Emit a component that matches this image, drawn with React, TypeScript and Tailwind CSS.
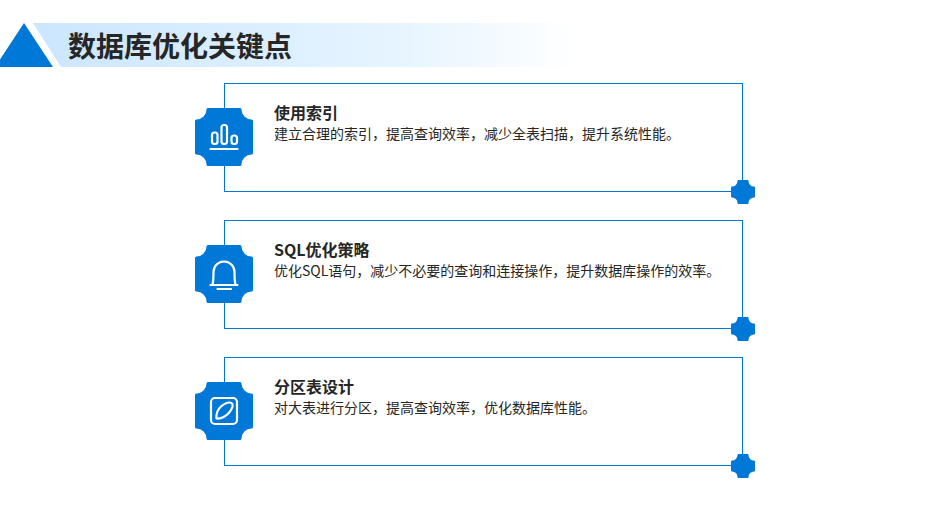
import React from "react";

const BLUE = "#0078d7";

const Badge = ({ size, cut, round, children }: { size: number; cut: number; round: number; children?: React.ReactNode }) => {
  // concave corners, tips softened with a round stroke
  const a = round / 2;
  const b = size - a;
  const c = cut;
  const p = `M${a + c} ${a}H${b - c}A${c} ${c} 0 0 0 ${b} ${a + c}V${b - c}A${c} ${c} 0 0 0 ${b - c} ${b}H${a + c}A${c} ${c} 0 0 0 ${a} ${b - c}V${a + c}A${c} ${c} 0 0 0 ${a + c} ${a}Z`;
  return (
    <svg width={size} height={size} viewBox={`0 0 ${size} ${size}`} className="block">
      <path d={p} fill={BLUE} stroke={BLUE} strokeWidth={round} strokeLinejoin="round" />
      {children}
    </svg>
  );
};

const BarsIcon = () => (
  <g fill="none" stroke="#fff" strokeWidth="2.2">
    <rect x="17" y="24.5" width="5.5" height="11.5" rx="2.5" />
    <rect x="26.5" y="17" width="5.5" height="19" rx="2.5" />
    <rect x="36.5" y="27.5" width="5.5" height="8.5" rx="2.5" />
    <path d="M15.5 41H42.5" strokeLinecap="round" />
  </g>
);

const BellIcon = () => (
  <g fill="none" stroke="#fff" strokeWidth="2.2" strokeLinecap="round">
    <path d="M17.5 39.5C18.5 36 18.5 31 18.5 27A10.5 10.5 0 0 1 39.5 27C39.5 31 39.5 36 40.5 39.5" />
    <path d="M15.5 40H42.5" />
    <path d="M22.5 44H36" />
  </g>
);

const NoteIcon = () => (
  <g fill="none" stroke="#fff" strokeWidth="2.2" strokeLinejoin="round">
    <rect x="16" y="16" width="26" height="26" rx="4" />
    <path d="M21.5 36.5C21 31 22.5 27.5 26 24.5C29 22 32 20.5 34.5 20.5C37 20.5 38 22 37.5 24.5C36.5 28 33.5 32 29.5 34.5C26.5 36.3 24 36.8 21.5 36.5Z" />
  </g>
);

const items = [
  {
    title: "使用索引",
    text: "建立合理的索引，提高查询效率，减少全表扫描，提升系统性能。",
    icon: <BarsIcon />,
  },
  {
    title: "SQL优化策略",
    text: "优化SQL语句，减少不必要的查询和连接操作，提升数据库操作的效率。",
    icon: <BellIcon />,
  },
  {
    title: "分区表设计",
    text: "对大表进行分区，提高查询效率，优化数据库性能。",
    icon: <NoteIcon />,
  },
];

const App = () => {
  return (
    <div className="w-[948px] h-[530px] bg-white overflow-hidden font-['Noto_Sans_CJK_SC','Noto_Sans',sans-serif] text-[#262626]">
      <div className="relative h-[83px] pt-[23px]">
        <div className="ml-[33px] w-[547px] h-[44px] pl-[35px] flex items-center bg-gradient-to-r from-[#cbe6ff] via-[#e6f4ff] via-[66%] to-white [clip-path:polygon(0_0,100%_0,100%_100%,28px_100%)]">
          <h1 className="text-[28px] leading-none font-bold">数据库优化关键点</h1>
        </div>
        <svg width="54" height="44" viewBox="0 0 54 44" className="absolute left-0 top-[23px]">
          <path d="M24 0L53 44H-5Z" fill={BLUE} />
        </svg>
      </div>

      <div className="ml-[224px] w-[519px] flex flex-col gap-[28px]">
        {items.map((item) => (
          <div key={item.title} className="relative h-[109px] border border-[#0078d7] pl-[49px] pt-[18px]">
            <div className="absolute left-[-30px] top-[24px]">
              <Badge size={58} cut={11.5} round={3}>{item.icon}</Badge>
            </div>
            <div className="absolute right-[-13px] bottom-[-13px]">
              <Badge size={24} cut={6.5} round={2} />
            </div>
            <h3 className="text-[16px] leading-[21px] font-bold">{item.title}</h3>
            <p className="text-[14px] leading-[20px]">{item.text}</p>
          </div>
        ))}
      </div>
    </div>
  );
};

export default App;
